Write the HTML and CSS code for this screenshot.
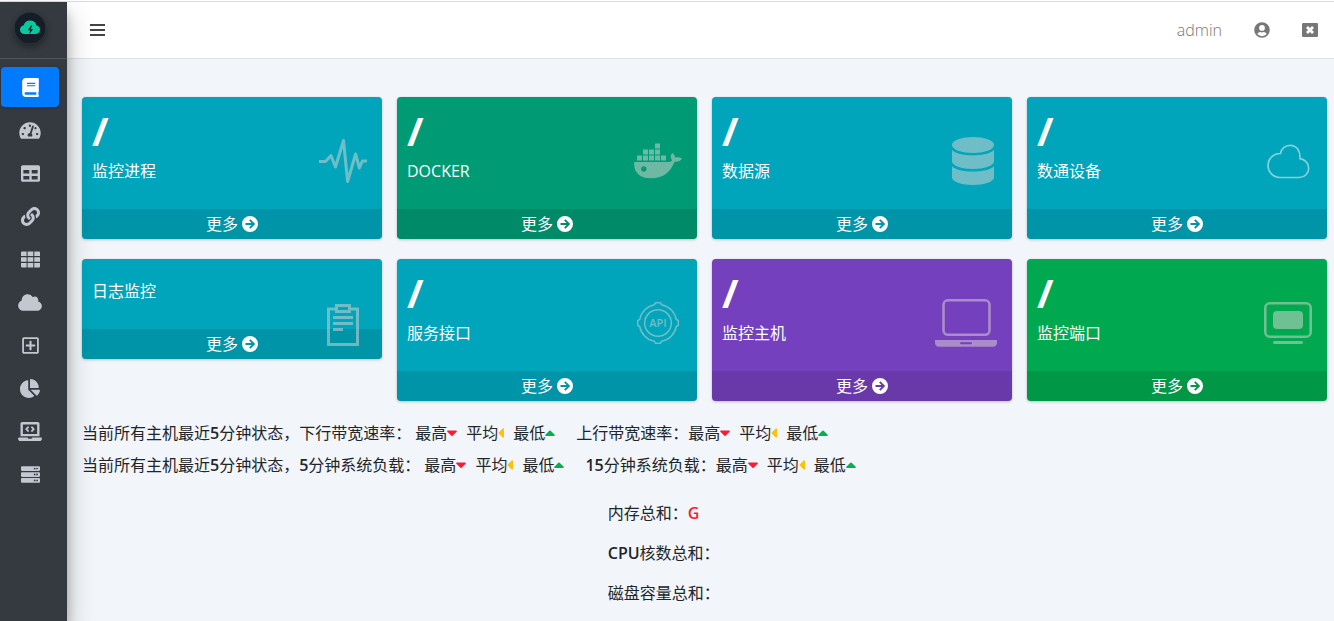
FILE: index.html
```
<!DOCTYPE html>
<html lang="zh-CN">
<head>
<meta charset="utf-8">
<title>监控主面板</title>
<link rel="stylesheet" href="styles.css">
</head>
<body>
<svg class="sprite" aria-hidden="true">
  <symbol id="i-more" viewBox="0 0 16 16"><path fill-rule="evenodd" d="M8 0a8 8 0 1 1 0 16A8 8 0 0 1 8 0zM7.100 4.600 9.500 7H3.500v2h6l-2.400 2.400 1.300 1.400L13.200 8 8.400 3.200z"/></symbol>
  <symbol id="i-down" viewBox="0 0 10 16"><path d="M.9 5.500h8.200c.7 0 1 .8.500 1.300L5.600 10.700a.9.9 0 0 1-1.200 0L.4 6.800c-.5-.5-.2-1.300.5-1.300z"/></symbol>
  <symbol id="i-left" viewBox="0 0 6 16"><path d="M6 3.900v8.200c0 .7-.8 1-1.300.5L.7 8.600a.9.9 0 0 1 0-1.200l4-4c.5-.5 1.300-.2 1.300.5z"/></symbol>
  <symbol id="i-up" viewBox="0 0 10 16"><path d="M.9 11h8.200c.7 0 1-.8.500-1.300L5.600 5.800a.9.9 0 0 0-1.200 0L.4 9.700C-.1 10.200.2 11 .9 11z"/></symbol>
</svg>
<div class="app">
  <aside class="sidebar">
    <a class="brand" href="#" aria-label="首页">
      <svg width="32" height="32" viewBox="0 0 32 32"><circle cx="16" cy="16" r="15.500" fill="#151d29"/><path fill="#09c9a0" d="M10.500 22a4.600 4.600 0 0 1-4.500-4.500c0-2.300 1.700-4 3.800-4.300.6-2.600 3-4.600 6.200-4.600 3.300 0 5.800 2 6.500 4.800 2 .2 3.500 2 3.500 4.200 0 2.500-2 4.400-4.400 4.400z"/><path fill="#151d29" d="m17.200 13.300-3.400 5h2.300l-1 4.200 4-5.300h-2.400l1.700-3.900z"/></svg>
    </a>
    <nav class="menu">
      <a class="item active" href="#" aria-label="主面板"><svg width="17" height="19" viewBox="0 0 448 512"><path d="M448 360V24c0-13.300-10.700-24-24-24H96C43 0 0 43 0 96v320c0 53 43 96 96 96h328c13.300 0 24-10.700 24-24v-16c0-7.500-3.500-14.300-8.900-18.700-4.200-15.400-4.200-59.300 0-74.700 5.400-4.300 8.900-11.100 8.900-18.600zM128 134c0-3.300 2.700-6 6-6h212c3.300 0 6 2.700 6 6v20c0 3.300-2.700 6-6 6H134c-3.300 0-6-2.700-6-6v-20zm0 64c0-3.300 2.700-6 6-6h212c3.300 0 6 2.700 6 6v20c0 3.300-2.700 6-6 6H134c-3.300 0-6-2.700-6-6v-20zm253.400 250H96c-17.700 0-32-14.300-32-32 0-17.600 14.400-32 32-32h285.400c-1.900 17.100-1.900 46.900 0 64z"/></svg></a>
      <a class="item" href="#" aria-label="仪表盘"><svg width="22" height="19" viewBox="0 0 576 512"><path d="M288 32C128.940 32 0 160.940 0 320c0 52.800 14.250 102.260 39.060 144.800 5.610 9.620 16.300 15.200 27.440 15.200h443c11.140 0 21.830-5.580 27.440-15.200C561.750 422.260 576 372.800 576 320c0-159.060-128.940-288-288-288zm0 64c14.710 0 26.580 10.130 30.320 23.650-1.110 2.260-2.640 4.230-3.450 6.670l-9.220 27.670c-5.130 3.490-10.970 6.010-17.640 6.010-17.670 0-32-14.330-32-32S270.330 96 288 96zM96 384c-17.670 0-32-14.330-32-32s14.330-32 32-32 32 14.330 32 32-14.330 32-32 32zm48-160c-17.670 0-32-14.330-32-32s14.330-32 32-32 32 14.330 32 32-14.330 32-32 32zm246.770-72.410l-61.330 184C343.130 347.330 352 364.540 352 384c0 11.720-3.380 22.550-8.880 32H232.880c-5.500-9.450-8.880-20.280-8.880-32 0-33.940 26.500-61.430 59.900-63.590l61.340-184.010c4.170-12.560 17.730-19.450 30.360-15.170 12.570 4.190 19.350 17.790 15.170 30.360zm14.660 57.200l15.520-46.550c3.470-1.290 7.130-2.230 11.050-2.230 17.670 0 32 14.330 32 32s-14.330 32-32 32c-11.380-.01-20.890-6.280-26.570-15.220zM480 384c-17.670 0-32-14.330-32-32s14.330-32 32-32 32 14.330 32 32-14.330 32-32 32z"/></svg></a>
      <a class="item" href="#" aria-label="列表"><svg width="19" height="19" viewBox="0 0 512 512"><path d="M464 32H48C21.490 32 0 53.490 0 80v352c0 26.510 21.490 48 48 48h416c26.510 0 48-21.490 48-48V80c0-26.510-21.490-48-48-48zM224 416H64v-96h160v96zm0-160H64v-96h160v96zm224 160H288v-96h160v96zm0-160H288v-96h160v96z"/></svg></a>
      <a class="item" href="#" aria-label="链接"><svg width="19" height="19" viewBox="0 0 512 512"><path d="M326.612 185.391c59.747 59.809 58.927 155.698.36 214.590-.11.12-.24.25-.36.37l-67.200 67.200c-59.270 59.270-155.699 59.262-214.960 0-59.270-59.260-59.270-155.700 0-214.960l37.106-37.106c9.840-9.840 26.786-3.300 27.294 10.606.648 17.722 3.826 35.527 9.690 52.721 1.986 5.822.567 12.262-3.783 16.612l-13.087 13.087c-28.026 28.026-28.905 73.660-1.155 101.960 28.024 28.579 74.086 28.749 102.325.51l67.200-67.190c28.191-28.191 28.073-73.757 0-101.830-3.701-3.694-7.429-6.564-10.341-8.569a16.037 16.037 0 0 1-6.947-12.606c-.396-10.567 3.348-21.456 11.698-29.806l21.054-21.055c5.521-5.521 14.182-6.199 20.584-1.731a152.482 152.482 0 0 1 20.522 17.197zM467.547 44.449c-59.261-59.262-155.690-59.270-214.960 0l-67.200 67.200c-.12.12-.25.25-.36.37-58.566 58.892-59.387 154.781.36 214.590a152.454 152.454 0 0 0 20.521 17.196c6.402 4.468 15.064 3.789 20.584-1.731l21.054-21.055c8.350-8.350 12.094-19.239 11.698-29.806a16.037 16.037 0 0 0-6.947-12.606c-2.912-2.005-6.640-4.875-10.341-8.569-28.073-28.073-28.191-73.639 0-101.830l67.200-67.190c28.239-28.239 74.300-28.069 102.325.51 27.750 28.300 26.872 73.934-1.155 101.960l-13.087 13.087c-4.350 4.350-5.769 10.790-3.783 16.612 5.864 17.194 9.042 34.999 9.690 52.721.509 13.906 17.454 20.446 27.294 10.606l37.106-37.106c59.271-59.259 59.271-155.699.001-214.959z"/></svg></a>
      <a class="item" href="#" aria-label="应用"><svg width="19" height="19" viewBox="0 0 19 19"><path d="M0 2.500a1 1 0 0 1 1-1h4.600V6H0zM6.600 1.500h5.700V6H6.600zM13.300 1.500H18a1 1 0 0 1 1 1V6h-5.700zM0 7.200h5.600v4.500H0zM6.600 7.200h5.700v4.500H6.600zM13.300 7.200H19v4.500h-5.700zM0 13h5.600v4.500H1a1 1 0 0 1-1-1zM6.600 13h5.700v4.500H6.600zM13.300 13H19v3.500a1 1 0 0 1-1 1h-4.700z"/></svg></a>
      <a class="item" href="#" aria-label="云"><svg width="24" height="19" viewBox="0 0 640 512"><path d="M537.600 226.600c4.100-10.700 6.400-22.400 6.400-34.600 0-53-43-96-96-96-19.700 0-38.100 6-53.300 16.200C367 64.200 315.300 32 256 32c-88.400 0-160 71.600-160 160 0 2.700.1 5.400.2 8.100C40.200 219.800 0 273.200 0 336c0 79.500 64.500 144 144 144h368c70.700 0 128-57.300 128-128 0-61.900-44-113.600-102.400-125.400z"/></svg></a>
      <a class="item" href="#" aria-label="添加"><svg width="17" height="19" viewBox="0 0 448 512"><path d="M352 240v32c0 6.600-5.400 12-12 12h-88v88c0 6.600-5.400 12-12 12h-32c-6.600 0-12-5.400-12-12v-88h-88c-6.600 0-12-5.400-12-12v-32c0-6.600 5.400-12 12-12h88v-88c0-6.600 5.400-12 12-12h32c6.600 0 12 5.400 12 12v88h88c6.600 0 12 5.400 12 12zm96-160v352c0 26.500-21.500 48-48 48H48c-26.500 0-48-21.500-48-48V80c0-26.500 21.500-48 48-48h352c26.500 0 48 21.500 48 48zm-48 346V86c0-3.300-2.700-6-6-6H54c-3.300 0-6 2.700-6 6v340c0 3.300 2.700 6 6 6h340c3.300 0 6-2.700 6-6z"/></svg></a>
      <a class="item" href="#" aria-label="图表"><svg width="20" height="19" viewBox="0 0 544 512"><path d="M527.790 288H290.500l158.030 158.030c6.040 6.040 15.980 6.530 22.190.68 38.700-36.460 65.320-85.610 73.130-140.860 1.340-9.460-6.510-17.850-16.060-17.850zm-15.830-64.800C503.720 103.740 408.260 8.280 288.800.04 279.680-.59 272 7.100 272 16.240V240h223.770c9.140 0 16.820-7.680 16.190-16.800zM224 288V50.710c0-9.550-8.390-17.400-17.840-16.060C86.990 51.490-4.100 155.600.14 280.370 4.500 408.510 114.830 513.590 243.030 511.980c50.400-.63 96.970-16.870 135.260-44.030 7.900-5.600 8.420-17.230 1.570-24.080L224 288z"/></svg></a>
      <a class="item" href="#" aria-label="终端"><svg width="24" height="19" viewBox="0 0 640 512"><path d="M255.030 261.650c6.250 6.250 16.380 6.250 22.630 0l11.310-11.310c6.250-6.250 6.250-16.380 0-22.630L253.250 192l35.710-35.720c6.250-6.250 6.250-16.380 0-22.630l-11.310-11.310c-6.250-6.250-16.380-6.250-22.630 0l-58.340 58.340c-6.250 6.250-6.250 16.380 0 22.630l58.350 58.340zm96.010-11.300l11.310 11.310c6.250 6.250 16.380 6.250 22.630 0l58.340-58.340c6.250-6.250 6.250-16.380 0-22.630l-58.340-58.340c-6.250-6.250-16.380-6.250-22.630 0l-11.310 11.310c-6.250 6.250-6.250 16.380 0 22.630L386.750 192l-35.710 35.720c-6.250 6.250-6.250 16.380 0 22.630zM624 416H381.540c-.74 19.810-14.710 32-32.740 32H288c-18.690 0-33.020-17.470-32.770-32H16c-8.800 0-16 7.200-16 16v16c0 35.200 28.800 64 64 64h512c35.200 0 64-28.800 64-64v-16c0-8.800-7.200-16-16-16zM576 48c0-26.400-21.600-48-48-48H112C85.600 0 64 21.600 64 48v336h512V48zm-64 272H128V64h384v256z"/></svg></a>
      <a class="item" href="#" aria-label="服务器"><svg width="19" height="19" viewBox="0 0 512 512"><path id="unit" d="M480 160H32c-17.673 0-32-14.327-32-32V64c0-17.673 14.327-32 32-32h448c17.673 0 32 14.327 32 32v64c0 17.673-14.327 32-32 32zm-48-88c-13.255 0-24 10.745-24 24s10.745 24 24 24 24-10.745 24-24-10.745-24-24-24zm-64 0c-13.255 0-24 10.745-24 24s10.745 24 24 24 24-10.745 24-24-10.745-24-24-24z"/><use href="#unit" y="160"/><use href="#unit" y="320"/></svg></a>
    </nav>
  </aside>
  <div class="main">
    <header class="topbar">
      <button class="icon-btn" type="button" aria-label="折叠菜单"><svg width="15" height="16" viewBox="0 0 15 16"><path d="M0 2h15v2H0zM0 7h15v2H0zM0 12h15v2H0z"/></svg></button>
      <div class="account">
        <a class="user" href="#">admin</a>
        <a class="icon-link" href="#" aria-label="用户"><svg width="16" height="16" viewBox="0 0 16 16"><path fill-rule="evenodd" d="M8 .2a7.800 7.800 0 1 1 0 15.600A7.800 7.800 0 0 1 8 .2zm0 2.800a2.900 2.900 0 1 0 0 5.800A2.900 2.900 0 0 0 8 3zM3.300 12a6.200 6.200 0 0 0 9.400 0c-.6-1.200-1.700-2-3.200-2-1 .5-2 .5-3 0-1.500 0-2.600.8-3.200 2z"/></svg></a>
        <a class="icon-link" href="#" aria-label="退出"><svg width="16" height="16" viewBox="0 0 16 16"><rect y="1" width="16" height="14" rx="1.200"/><path d="m5 5 6 6M11 5l-6 6" stroke="#fff" stroke-width="2.800"/></svg></a>
      </div>
    </header>
    <main class="content">
      <section class="cards">
        <article class="card cyan">
          <div class="inner"><h3>/</h3><p>监控进程</p></div>
          <svg class="pic" width="48" height="48" viewBox="0 0 48 48"><path class="line" stroke-width="3" stroke-linejoin="round" d="M0 24.500h6.500l5.500-6 4.500 11.500L24.500 3.500 28.600 44.500l8-27.500 3.800 14 3-7H48"/></svg>
          <a class="more" href="#">更多 <svg width="16" height="16"><use href="#i-more"/></svg></a>
        </article>
        <article class="card teal">
          <div class="inner"><h3>/</h3><p>DOCKER</p></div>
          <svg class="pic" width="48" height="48" viewBox="0 0 48 48"><path d="M21 6.500h5v5h-5zM9 12.500h5v5H9zM15 12.500h5v5h-5zM21 12.500h5v5h-5zM3 18.500h5v5H3zM9 18.500h5v5H9zM15 18.500h5v5h-5zM21 18.500h5v5h-5zM27 18.500h5v5h-5z"/><path fill-rule="evenodd" d="M.2 25h34.500c1.800 0 2.800-.5 3.400-1.400-2-2.700-1.700-5.500.3-7.600 1.700 1.300 2.500 2.700 2.700 4.500 2.500-.6 4.900-.4 6.900.9-1.200 2.400-3.900 3.500-7.500 3.300C36.500 35.600 28.500 41.300 17 41.300 6.200 41.300-.8 35.500.2 25zm9.600 4.300a2.700 2.700 0 1 0 0 5.400 2.700 2.700 0 0 0 0-5.400z"/></svg>
          <a class="more" href="#">更多 <svg width="16" height="16"><use href="#i-more"/></svg></a>
        </article>
        <article class="card cyan">
          <div class="inner"><h3>/</h3><p>数据源</p></div>
          <svg class="pic" width="48" height="48" viewBox="0 0 48 48"><ellipse cx="24" cy="8" rx="21" ry="8"/><path d="M3 13c3.500 3.500 11 5.300 21 5.300S41.500 16.500 45 13v11.500c0 4-9.500 7.500-21 7.500S3 28.500 3 24.500zM3 29.300c3.500 3.500 11 5.300 21 5.300s17.500-1.800 21-5.300V40.500c0 4-9.500 7.500-21 7.500S3 44.500 3 40.500z"/></svg>
          <a class="more" href="#">更多 <svg width="16" height="16"><use href="#i-more"/></svg></a>
        </article>
        <article class="card cyan">
          <div class="inner"><h3>/</h3><p>数通设备</p></div>
          <svg class="pic bright" width="48" height="48" viewBox="0 0 48 48"><path class="line" stroke-width="1.700" d="M15.500 40.500a12 12 0 1 1 1-24C17.300 11.800 21 8.300 26 8.300c6.300 0 10.500 5 10 13.400 4.500.6 8.700 4.200 8.700 9.600 0 5-4 9.200-9 9.200z"/></svg>
          <a class="more" href="#">更多 <svg width="16" height="16"><use href="#i-more"/></svg></a>
        </article>
        <article class="card cyan">
          <div class="inner"><h3></h3><p>日志监控</p></div>
          <svg class="pic" width="48" height="48" viewBox="0 0 48 48"><path class="line" stroke-width="3" d="M17 10H9.500v35.500h29V10H32M17.500 6.500h13v6h-13z"/><path d="M14 17h20v3H14zM14 23h20v3H14zM14 29h10v3H14z"/></svg>
          <a class="more" href="#">更多 <svg width="16" height="16"><use href="#i-more"/></svg></a>
        </article>
        <article class="card cyan">
          <div class="inner"><h3>/</h3><p>服务接口</p></div>
          <svg class="pic" width="48" height="48" viewBox="0 0 48 48"><g class="line" stroke-width="1.500"><circle cx="24" cy="24" r="13.300"/><path d="M27.500 5.700A18.600 18.600 0 0 1 42.300 20.500l2 1v5l-2 1A18.600 18.600 0 0 1 27.500 42.300l-1 2h-5l-1-2A18.600 18.600 0 0 1 5.700 27.500l-2-1v-5l2-1A18.600 18.600 0 0 1 20.500 5.700l1-2h5z"/></g><text x="24" y="28" text-anchor="middle" class="api">API</text></svg>
          <a class="more" href="#">更多 <svg width="16" height="16"><use href="#i-more"/></svg></a>
        </article>
        <article class="card purple">
          <div class="inner"><h3>/</h3><p>监控主机</p></div>
          <svg class="pic" width="62" height="48" viewBox="0 0 62 48"><rect class="line" stroke-width="2.600" x="8.500" y="1.300" width="46" height="34.500" rx="4.500"/><path fill-rule="evenodd" d="M0 41h62v2.500c0 2.500-1.500 4.300-4 4.300H4c-2.500 0-4-1.800-4-4.300zm26 2.200a1 1 0 0 0 0 2h10a1 1 0 0 0 0-2z"/></svg>
          <a class="more" href="#">更多 <svg width="16" height="16"><use href="#i-more"/></svg></a>
        </article>
        <article class="card green">
          <div class="inner"><h3>/</h3><p>监控端口</p></div>
          <svg class="pic" width="48" height="48" viewBox="0 0 48 48"><rect class="line" stroke-width="2.600" x="1.300" y="4.300" width="45.400" height="33.400" rx="4.500"/><rect x="9" y="12" width="30" height="18" rx="4"/><rect x="9" y="42" width="30" height="3" rx="1.500"/></svg>
          <a class="more" href="#">更多 <svg width="16" height="16"><use href="#i-more"/></svg></a>
        </article>
      </section>
      <section class="stats">
        <div class="stat">
          <span>当前所有主机最近<b>5</b>分钟状态，下行带宽速率：</span>
          <div class="marks">
            <span>最高<svg class="red" width="10" height="16"><use href="#i-down"/></svg></span>
            <span>平均<svg class="amber" width="6" height="16"><use href="#i-left"/></svg></span>
            <span>最低<svg class="lime" width="10" height="16"><use href="#i-up"/></svg></span>
          </div>
          <div class="second">
            <span>上行带宽速率：</span>
            <div class="marks">
              <span>最高<svg class="red" width="10" height="16"><use href="#i-down"/></svg></span>
              <span>平均<svg class="amber" width="6" height="16"><use href="#i-left"/></svg></span>
              <span>最低<svg class="lime" width="10" height="16"><use href="#i-up"/></svg></span>
            </div>
          </div>
        </div>
        <div class="stat">
          <span>当前所有主机最近<b>5</b>分钟状态，<b>5</b>分钟系统负载：</span>
          <div class="marks">
            <span>最高<svg class="red" width="10" height="16"><use href="#i-down"/></svg></span>
            <span>平均<svg class="amber" width="6" height="16"><use href="#i-left"/></svg></span>
            <span>最低<svg class="lime" width="10" height="16"><use href="#i-up"/></svg></span>
          </div>
          <div class="second">
            <span><b>15</b>分钟系统负载：</span>
            <div class="marks">
              <span>最高<svg class="red" width="10" height="16"><use href="#i-down"/></svg></span>
              <span>平均<svg class="amber" width="6" height="16"><use href="#i-left"/></svg></span>
              <span>最低<svg class="lime" width="10" height="16"><use href="#i-up"/></svg></span>
            </div>
          </div>
        </div>
      </section>
      <section class="totals">
        <p>内存总和：<b class="red">G</b></p>
        <p><b>CPU</b>核数总和：</p>
        <p>磁盘容量总和：</p>
      </section>
    </main>
  </div>
</div>
</body>
</html>
```
FILE: styles.css
```
* { box-sizing: border-box; }
body {
  margin: 0;
  padding-top: 1px;
  background: #fff;
  color: #212529;
  font: 400 16px/24px "Open Sans", "Noto Sans CJK SC", sans-serif;
}
h3, p { margin: 0; }
b { font-weight: 600; }
a { color: inherit; text-decoration: none; }
svg { fill: currentColor; flex: none; }
.sprite { display: none; }

.app {
  display: flex;
  min-height: calc(100vh - 1px);
  border-top: 1px solid #d9dbde;
}

.sidebar {
  position: relative;
  z-index: 1;
  flex: none;
  width: 67px;
  background: #343a40;
  color: #c2c7d0;
  box-shadow: 0 14px 28px rgba(0, 0, 0, .25), 0 10px 10px rgba(0, 0, 0, .22);
}
.brand {
  display: flex;
  align-items: center;
  height: 57px;
  padding: 0 14px 4px;
  border-bottom: 1px solid #4b545c;
}
.brand svg {
  border-radius: 50%;
  box-shadow: 0 3px 6px rgba(0, 0, 0, .16), 0 3px 6px rgba(0, 0, 0, .23);
}
.menu {
  display: flex;
  flex-direction: column;
  gap: 3px;
  padding: 8px 8px 8px 1px;
}
.item {
  display: flex;
  align-items: center;
  justify-content: center;
  height: 40px;
  border-radius: 4px;
}
.item.active {
  background: #007bff;
  color: #fff;
  box-shadow: 0 1px 3px rgba(0, 0, 0, .2);
}

.main {
  flex: 1;
  min-width: 0;
  background: #f2f5f9;
}
.topbar {
  display: flex;
  align-items: center;
  justify-content: space-between;
  height: 57px;
  padding: 0 16px 0 23px;
  background: #fff;
  border-bottom: 1px solid #dee2e6;
}
.icon-btn {
  display: flex;
  padding: 0;
  border: 0;
  background: none;
  color: #444;
}
.account {
  display: flex;
  align-items: center;
  gap: 32px;
  color: #777;
}
.user { font-weight: 300; }
.icon-link { display: flex; }

.content { padding: 38px 7px 16px 15px; }
.cards {
  display: grid;
  grid-template-columns: repeat(4, 1fr);
  align-items: start;
  gap: 20px 15px;
  margin-bottom: 20px;
}
.card {
  position: relative;
  overflow: hidden;
  border-radius: 4px;
  color: #fff;
  box-shadow: 0 0 1px rgba(0, 0, 0, .125), 0 1px 3px rgba(0, 0, 0, .2);
}
.cyan { background: #00a5bb; }
.teal { background: #009a74; }
.purple { background: #7540be; }
.green { background: #00a94f; }
.inner { padding: 13px 10px 26px; }
.inner h3 {
  margin-bottom: 7px;
  font-size: 40px;
  font-weight: 700;
  line-height: 42px;
}
.pic {
  position: absolute;
  top: 40px;
  right: 15px;
  color: #ddd8d4;
  opacity: .5;
}
.pic.bright { color: #fff; }
.line {
  fill: none;
  stroke: currentColor;
}
.api { font: 600 11px "Open Sans", sans-serif; }
.more {
  display: flex;
  align-items: center;
  justify-content: center;
  gap: 4px;
  height: 30px;
  background: rgba(0, 0, 0, .1);
}

.stats {
  display: grid;
  gap: 8px;
  margin-bottom: 24px;
}
.stat, .marks, .marks span, .second {
  display: flex;
  align-items: center;
}
.stat { gap: 4px; }
.marks { gap: 9px; }
.second { margin-left: 17px; }
.red { color: #fb1b36; }
.amber { color: #ffc107; }
.lime { color: #07ad50; }

.totals {
  display: grid;
  grid-template-columns: 5fr 7fr;
  gap: 16px 12px;
}
.totals p { grid-column: 2; }
```
